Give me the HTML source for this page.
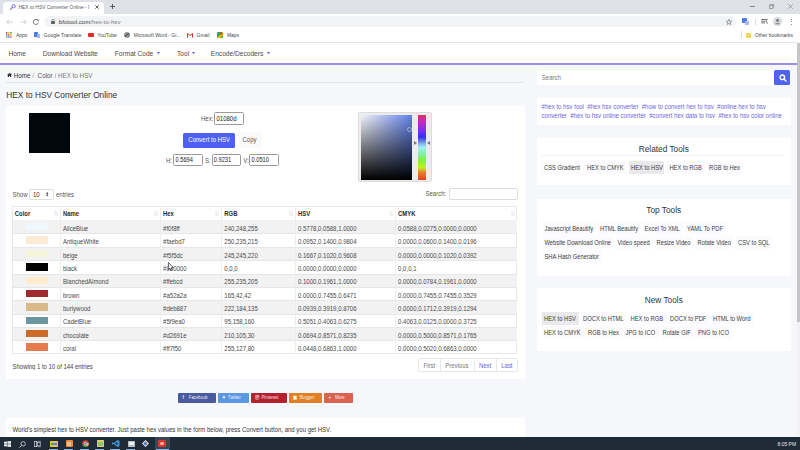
<!DOCTYPE html>
<html><head><meta charset="utf-8"><style>
*{box-sizing:border-box;margin:0;padding:0}
html,body{width:800px;height:450px;overflow:hidden;font-family:"Liberation Sans",sans-serif;background:#f6f7fb;color:#333}
.a{position:absolute;white-space:nowrap;line-height:1}
svg{position:absolute;overflow:visible}
</style></head><body>
<div class="a" style="left:0px;top:0px;width:800px;height:13.5px;background:#dee1e6"></div>
<div class="a" style="left:3px;top:2px;width:100.5px;height:11.5px;background:#fff;border-radius:4px 4px 0 0"></div>
<svg style="left:9px;top:3.5px" width="7" height="7" viewBox="0 0 7 7"><circle cx="4.6" cy="2.2" r="1.7" fill="none" stroke="#7a6ff0" stroke-width="1"/><path d="M3.6 3.2 L1.2 5.8" stroke="#7a6ff0" stroke-width="1.1"/><circle cx="1.6" cy="4.6" r="0.8" fill="#f2c94c"/></svg>
<div class="a" style="left:18.5px;top:6.0px;font-size:4.9px;color:#55585c;">HEX to HSV Converter Online - I</div>
<svg style="left:94.5px;top:5px" width="4" height="4" viewBox="0 0 4 4"><path d="M0.3 0.3L3.7 3.7M3.7 0.3L0.3 3.7" stroke="#3c4043" stroke-width="0.8"/></svg>
<svg style="left:109.5px;top:4px" width="5" height="5" viewBox="0 0 5 5"><path d="M2.5 0V5M0 2.5H5" stroke="#3c4043" stroke-width="0.8"/></svg>
<div class="a" style="left:750px;top:6px;width:4.5px;height:0.7px;background:#888"></div>
<svg style="left:769px;top:4px" width="5" height="5" viewBox="0 0 5 5"><rect x="0.4" y="1.2" width="3.4" height="3.4" fill="none" stroke="#888" stroke-width="0.7"/><path d="M1.2 0.4H4.6V3.8" fill="none" stroke="#888" stroke-width="0.7"/></svg>
<svg style="left:788px;top:3.5px" width="5" height="5" viewBox="0 0 5 5"><path d="M0.2 0.2L4.8 4.8M4.8 0.2L0.2 4.8" stroke="#888" stroke-width="0.7"/></svg>
<div class="a" style="left:0px;top:13.5px;width:800px;height:14.5px;background:#fff"></div>
<svg style="left:6px;top:18.5px" width="7" height="6" viewBox="0 0 7 6"><path d="M6.5 3H0.8M3.2 0.5L0.7 3L3.2 5.5" fill="none" stroke="#bdc1c6" stroke-width="0.8"/></svg>
<svg style="left:19.5px;top:18.5px" width="7" height="6" viewBox="0 0 7 6"><path d="M0.5 3H6.2M3.8 0.5L6.3 3L3.8 5.5" fill="none" stroke="#bdc1c6" stroke-width="0.8"/></svg>
<svg style="left:33px;top:18.5px" width="6" height="6" viewBox="0 0 6 6"><path d="M5 1.6A2.5 2.5 0 1 0 5.3 3.6" fill="none" stroke="#5f6368" stroke-width="0.9"/><path d="M3.6 0.6H5.6V2.6Z" fill="#5f6368"/></svg>
<div class="a" style="left:45px;top:16px;width:691px;height:11px;background:#f1f3f4;border-radius:6px"></div>
<svg style="left:51px;top:19px" width="4" height="5" viewBox="0 0 4 5"><rect x="0" y="2" width="4" height="3" rx="0.4" fill="#5f6368"/><path d="M0.9 2.2V1.4A1.1 1.1 0 0 1 3.1 1.4V2.2" fill="none" stroke="#5f6368" stroke-width="0.6"/></svg>
<div class="a" style="left:58.8px;top:18.6px;font-size:6.1px;color:#3a3c40;">bfotool.com<span style="color:#7a7e83">/hex-to-hsv</span></div>
<svg style="left:726px;top:19px" width="6" height="6" viewBox="0 0 10 10"><path d="M5 0.6L6.3 3.6L9.5 3.8L7 5.9L7.8 9.2L5 7.4L2.2 9.2L3 5.9L0.5 3.8L3.7 3.6Z" fill="none" stroke="#5f6368" stroke-width="1"/></svg>
<div class="a" style="left:742px;top:18px;width:5px;height:5px;background:#4a7bec;border-radius:0.6px"></div>
<div class="a" style="left:745px;top:21px;width:4px;height:4px;background:#aab8f0;border-radius:0.6px"></div>
<div class="a" style="left:754.5px;top:19px;width:0.6px;height:6px;background:#dadce0"></div>
<svg style="left:761px;top:19px" width="7" height="5" viewBox="0 0 7 5"><path d="M0.3 0.5H6.7M0.3 2.2H4.5M0.3 3.9H4M5.2 1.4L6.4 4.6" stroke="#5f6368" stroke-width="0.9"/></svg>
<svg style="left:773px;top:17px" width="9" height="9" viewBox="0 0 9 9"><circle cx="4.5" cy="4.5" r="4.5" fill="#dadce0"/><circle cx="4.5" cy="3.4" r="1.6" fill="#80868b"/><path d="M1.6 7.2A3.4 2.6 0 0 1 7.4 7.2" fill="#80868b"/></svg>
<div class="a" style="left:790.5px;top:19.2px;width:1.1px;height:1.1px;background:#5f6368;border-radius:50%"></div>
<div class="a" style="left:790.5px;top:21.4px;width:1.1px;height:1.1px;background:#5f6368;border-radius:50%"></div>
<div class="a" style="left:790.5px;top:23.6px;width:1.1px;height:1.1px;background:#5f6368;border-radius:50%"></div>
<div class="a" style="left:0px;top:28px;width:800px;height:15px;background:#fff;border-bottom:0.9px solid #e3e4e7"></div>
<svg style="left:6px;top:32px" width="6" height="6" viewBox="0 0 6 6"><rect x="0.0" y="0.0" width="1.5" height="1.5" fill="#ea4335"/><rect x="2.1" y="0.0" width="1.5" height="1.5" fill="#fbbc04"/><rect x="4.2" y="0.0" width="1.5" height="1.5" fill="#34a853"/><rect x="0.0" y="2.1" width="1.5" height="1.5" fill="#4285f4"/><rect x="2.1" y="2.1" width="1.5" height="1.5" fill="#ea4335"/><rect x="4.2" y="2.1" width="1.5" height="1.5" fill="#fbbc04"/><rect x="0.0" y="4.2" width="1.5" height="1.5" fill="#34a853"/><rect x="2.1" y="4.2" width="1.5" height="1.5" fill="#4285f4"/><rect x="4.2" y="4.2" width="1.5" height="1.5" fill="#ea4335"/></svg>
<div class="a" style="left:16px;top:33.6px;font-size:4.95px;color:#45484c;">Apps</div>
<div class="a" style="left:34px;top:32px;width:4px;height:5px;background:#4a7bec;border-radius:0.5px"></div>
<div class="a" style="left:36.5px;top:34px;width:3.5px;height:4px;background:#a8b6ef;border-radius:0.5px"></div>
<div class="a" style="left:43.8px;top:33.6px;font-size:4.95px;color:#45484c;">Google Translate</div>
<div class="a" style="left:88px;top:33px;width:5.5px;height:3.8px;background:#e02a2a;border-radius:1px"></div>
<div class="a" style="left:97.3px;top:33.6px;font-size:4.95px;color:#45484c;">YouTube</div>
<svg style="left:124px;top:32px" width="6" height="6" viewBox="0 0 6 6"><circle cx="3" cy="3" r="2.8" fill="#5f6368"/><path d="M1 2.2C2 2.6 2.2 1.2 3.4 1.1M2.4 5.4C2.6 4 3.8 4.2 4.6 3.4" stroke="#fff" stroke-width="0.6" fill="none"/></svg>
<div class="a" style="left:133.8px;top:33.6px;font-size:4.95px;color:#45484c;">Microsoft Word - Gi...</div>
<svg style="left:187px;top:33px" width="6" height="4.5" viewBox="0 0 6 4.5"><path d="M0.5 4.5V0.5L3 2.5L5.5 0.5V4.5" fill="none" stroke="#d93025" stroke-width="1"/></svg>
<div class="a" style="left:196.6px;top:33.6px;font-size:4.95px;color:#45484c;">Gmail</div>
<svg style="left:217px;top:32px" width="6" height="6" viewBox="0 0 6 6"><rect width="6" height="6" rx="1" fill="#34a853"/><path d="M0 6L6 0V3L3 6Z" fill="#fbbc04"/><circle cx="4.2" cy="1.8" r="1.3" fill="#ea4335"/></svg>
<div class="a" style="left:227px;top:33.6px;font-size:4.95px;color:#45484c;">Maps</div>
<div class="a" style="left:741px;top:31px;width:0.6px;height:7px;background:#dadce0"></div>
<div class="a" style="left:746px;top:32.5px;width:4.5px;height:5.5px;background:#f5d55f;border-radius:0.5px"></div>
<div class="a" style="left:755px;top:33.6px;font-size:4.95px;color:#45484c;">Other bookmarks</div>
<div class="a" style="left:0px;top:43px;width:797px;height:20px;background:#fff"></div>
<div class="a" style="left:0px;top:62.8px;width:797px;height:1.8px;background:#978fea"></div>
<div class="a" style="left:8.4px;top:50.8px;font-size:6.6px;color:#4a4a4a;transform-origin:0 5.59px;transform:scaleY(1.15);">Home</div>
<div class="a" style="left:42.8px;top:50.8px;font-size:6.6px;color:#4a4a4a;transform-origin:0 5.59px;transform:scaleY(1.15);">Download Website</div>
<div class="a" style="left:114.8px;top:50.8px;font-size:6.6px;color:#4a4a4a;transform-origin:0 5.59px;transform:scaleY(1.15);">Format Code</div>
<svg style="left:156.7px;top:52.2px" width="3" height="2.2" viewBox="0 0 3 2.2"><path d="M0 0H3L1.5 2.2Z" fill="#5b63e6"/></svg>
<div class="a" style="left:177px;top:50.8px;font-size:6.6px;color:#4a4a4a;transform-origin:0 5.59px;transform:scaleY(1.15);">Tool</div>
<svg style="left:191.8px;top:52.2px" width="3" height="2.2" viewBox="0 0 3 2.2"><path d="M0 0H3L1.5 2.2Z" fill="#5b63e6"/></svg>
<div class="a" style="left:210.8px;top:50.8px;font-size:6.6px;color:#4a4a4a;transform-origin:0 5.59px;transform:scaleY(1.15);">Encode/Decoders</div>
<svg style="left:267.2px;top:52.2px" width="3" height="2.2" viewBox="0 0 3 2.2"><path d="M0 0H3L1.5 2.2Z" fill="#5b63e6"/></svg>
<div class="a" style="left:797px;top:42px;width:3px;height:395px;background:#f3f3f5"></div>
<div class="a" style="left:797px;top:43px;width:3px;height:279px;background:#c5c5c8"></div>
<svg style="left:6.5px;top:72.8px" width="5" height="4" viewBox="0 0 5 4"><path d="M0 2.1L2.5 0L5 2.1H4.2V4H3V2.9H2V4H0.8V2.1Z" fill="#333"/><rect x="3.5" y="0.3" width="0.7" height="1.2" fill="#333"/></svg>
<div class="a" style="left:13.8px;top:72.8px;font-size:6.3px;color:#333;transform-origin:0 5.33px;transform:scaleY(1.15);">Home <span style="color:#999">/</span>&nbsp; <span style="color:#555">Color</span> <span style="color:#777">/ HEX to HSV</span></div>
<div class="a" style="left:6px;top:82px;width:518px;height:0.8px;background:#e4e5ea"></div>
<div class="a" style="left:6.3px;top:90.5px;font-size:8.32px;color:#333;transform-origin:0 7.04px;transform:scaleY(1.15);">HEX to HSV Converter Online</div>
<div class="a" style="left:6px;top:105.6px;width:518.5px;height:273.4px;background:#fff"></div>
<div class="a" style="left:29px;top:113px;width:41px;height:40px;background:#01080d"></div>
<div class="a" style="left:201px;top:115.5px;font-size:6px;color:#555;transform-origin:0 5.08px;transform:scaleY(1.15);">Hex:</div>
<div class="a" style="left:214px;top:111.7px;width:29.7px;height:13px;background:#fff;border:0.9px solid #9a9a9a;border-radius:1.5px"></div>
<div class="a" style="left:216.5px;top:115.5px;font-size:6px;color:#222;transform-origin:0 5.08px;transform:scaleY(1.15);">01080d</div>
<div class="a" style="left:183px;top:132.6px;width:52px;height:15.4px;background:#4e5ff4;border-radius:1.5px"></div>
<div class="a" style="left:188.3px;top:136.8px;font-size:6px;color:#fff;transform-origin:0 5.08px;transform:scaleY(1.15);">Convert to HSV</div>
<div class="a" style="left:238px;top:132.3px;width:24px;height:15.6px;background:#fafafb;border-radius:1.5px"></div>
<div class="a" style="left:242.5px;top:136.8px;font-size:6px;color:#555;transform-origin:0 5.08px;transform:scaleY(1.15);">Copy</div>
<div class="a" style="left:166px;top:157.8px;font-size:6px;color:#555;transform-origin:0 5.08px;transform:scaleY(1.15);">H:</div>
<div class="a" style="left:173.2px;top:154.3px;width:29.7px;height:11.8px;background:#fff;border:0.9px solid #9a9a9a;border-radius:1.5px"></div>
<div class="a" style="left:175.5px;top:157.8px;font-size:5.699999999999999px;color:#222;transform-origin:0 4.83px;transform:scaleY(1.15);">0.5694</div>
<div class="a" style="left:205px;top:157.8px;font-size:6px;color:#555;transform-origin:0 5.08px;transform:scaleY(1.15);">S:</div>
<div class="a" style="left:211.5px;top:154.3px;width:29.7px;height:11.8px;background:#fff;border:0.9px solid #9a9a9a;border-radius:1.5px"></div>
<div class="a" style="left:213.8px;top:157.8px;font-size:5.699999999999999px;color:#222;transform-origin:0 4.83px;transform:scaleY(1.15);">0.9231</div>
<div class="a" style="left:243.3px;top:157.8px;font-size:6px;color:#555;transform-origin:0 5.08px;transform:scaleY(1.15);">V:</div>
<div class="a" style="left:249.2px;top:154.3px;width:29.7px;height:11.8px;background:#fff;border:0.9px solid #9a9a9a;border-radius:1.5px"></div>
<div class="a" style="left:251.5px;top:157.8px;font-size:5.699999999999999px;color:#222;transform-origin:0 4.83px;transform:scaleY(1.15);">0.0510</div>
<div class="a" style="left:358.1px;top:111.6px;width:73.8px;height:70.2px;background:#ececec;border:0.8px solid #dcdcdc;border-radius:2px"></div>
<div class="a" style="left:361.4px;top:115.3px;width:50.2px;height:64.7px;background:linear-gradient(to top,#000,rgba(0,0,0,0)),linear-gradient(to right,#f4f4f8,#6080e8)"></div>
<svg style="left:406.5px;top:126.5px" width="5" height="5" viewBox="0 0 5 5"><circle cx="2.5" cy="2.5" r="2" fill="none" stroke="#c8c8c8" stroke-width="0.7"/></svg>
<div class="a" style="left:418px;top:115.3px;width:8px;height:64.7px;background:linear-gradient(to bottom,#e0305a 0%,#d020d0 11%,#7030f0 26%,#3030f0 34%,#80a0f0 43%,#a0f0f0 50%,#80f0a0 61%,#80f040 69%,#c0f020 81%,#f08020 88%,#e04020 100%)"></div>
<svg style="left:414.3px;top:141.4px" width="3" height="4" viewBox="0 0 3 4"><path d="M0 0L3 2L0 4Z" fill="#777"/></svg>
<svg style="left:427px;top:141.4px" width="3" height="4" viewBox="0 0 3 4"><path d="M3 0L0 2L3 4Z" fill="#777"/></svg>
<div class="a" style="left:12.5px;top:191.5px;font-size:6px;color:#555;transform-origin:0 5.08px;transform:scaleY(1.15);">Show</div>
<div class="a" style="left:29px;top:188.6px;width:25px;height:11.5px;background:#fff;border:0.8px solid #dedede;border-radius:2px"></div>
<div class="a" style="left:33px;top:191.5px;font-size:6px;color:#333;transform-origin:0 5.08px;transform:scaleY(1.15);">10</div>
<svg style="left:46px;top:192px" width="2.4" height="4.4" viewBox="0 0 2.4 4.4"><path d="M0 1.8L1.2 0L2.4 1.8ZM0 2.6H2.4L1.2 4.4Z" fill="#333"/></svg>
<div class="a" style="left:56px;top:191.5px;font-size:6px;color:#555;transform-origin:0 5.08px;transform:scaleY(1.15);">entries</div>
<div class="a" style="left:425.5px;top:191.1px;font-size:6px;color:#555;transform-origin:0 5.08px;transform:scaleY(1.15);">Search:</div>
<div class="a" style="left:449.4px;top:188.2px;width:69px;height:12.2px;background:#fff;border:0.8px solid #dcdcdc;border-radius:2px"></div>
<div class="a" style="left:12px;top:206px;width:505px;height:147.8px;border:0.8px solid #e8e8e8"></div>
<div class="a" style="left:14.8px;top:211.6px;font-size:5.9px;color:#2a2a2a;transform-origin:0 4.99px;transform:scaleY(1.15);font-weight:bold">Color</div>
<svg style="left:53.7px;top:211px" width="4" height="5" viewBox="0 0 4 5"><path d="M1 4.6V0.6M0.2 1.4L1 0.4L1.8 1.4M3 0.4V4.4M2.2 3.6L3 4.6L3.8 3.6" fill="none" stroke="#cfcfcf" stroke-width="0.5"/></svg>
<div class="a" style="left:63.0px;top:211.6px;font-size:5.9px;color:#2a2a2a;transform-origin:0 4.99px;transform:scaleY(1.15);font-weight:bold">Name</div>
<svg style="left:153.8px;top:211px" width="4" height="5" viewBox="0 0 4 5"><path d="M1 4.6V0.6M0.2 1.4L1 0.4L1.8 1.4M3 0.4V4.4M2.2 3.6L3 4.6L3.8 3.6" fill="none" stroke="#cfcfcf" stroke-width="0.5"/></svg>
<div class="a" style="left:163.10000000000002px;top:211.6px;font-size:5.9px;color:#2a2a2a;transform-origin:0 4.99px;transform:scaleY(1.15);font-weight:bold">Hex</div>
<svg style="left:215.0px;top:211px" width="4" height="5" viewBox="0 0 4 5"><path d="M1 4.6V0.6M0.2 1.4L1 0.4L1.8 1.4M3 0.4V4.4M2.2 3.6L3 4.6L3.8 3.6" fill="none" stroke="#cfcfcf" stroke-width="0.5"/></svg>
<div class="a" style="left:224.3px;top:211.6px;font-size:5.9px;color:#2a2a2a;transform-origin:0 4.99px;transform:scaleY(1.15);font-weight:bold">RGB</div>
<svg style="left:288.7px;top:211px" width="4" height="5" viewBox="0 0 4 5"><path d="M1 4.6V0.6M0.2 1.4L1 0.4L1.8 1.4M3 0.4V4.4M2.2 3.6L3 4.6L3.8 3.6" fill="none" stroke="#cfcfcf" stroke-width="0.5"/></svg>
<div class="a" style="left:298.0px;top:211.6px;font-size:5.9px;color:#2a2a2a;transform-origin:0 4.99px;transform:scaleY(1.15);font-weight:bold">HSV</div>
<svg style="left:388.8px;top:211px" width="4" height="5" viewBox="0 0 4 5"><path d="M1 4.6V0.6M0.2 1.4L1 0.4L1.8 1.4M3 0.4V4.4M2.2 3.6L3 4.6L3.8 3.6" fill="none" stroke="#cfcfcf" stroke-width="0.5"/></svg>
<div class="a" style="left:398.1px;top:211.6px;font-size:5.9px;color:#2a2a2a;transform-origin:0 4.99px;transform:scaleY(1.15);font-weight:bold">CMYK</div>
<svg style="left:510.5px;top:211px" width="4" height="5" viewBox="0 0 4 5"><path d="M1 4.6V0.6M0.2 1.4L1 0.4L1.8 1.4M3 0.4V4.4M2.2 3.6L3 4.6L3.8 3.6" fill="none" stroke="#cfcfcf" stroke-width="0.5"/></svg>
<div class="a" style="left:12px;top:219.5px;width:505px;height:1px;background:#d4d4d4"></div>
<div class="a" style="left:12.5px;top:220px;width:504px;height:13.38px;background:#f2f2f2"></div>
<div class="a" style="left:26.3px;top:223px;width:21.3px;height:7.4px;background:#f0f8ff"></div>
<div class="a" style="left:63.0px;top:225.8px;font-size:6.03px;color:#4a4a4a;transform-origin:0 5.10px;transform:scaleY(1.15);">AliceBlue</div>
<div class="a" style="left:163.10000000000002px;top:225.8px;font-size:6.03px;color:#4a4a4a;transform-origin:0 5.10px;transform:scaleY(1.15);">#f0f8ff</div>
<div class="a" style="left:224.3px;top:225.8px;font-size:6.03px;color:#4a4a4a;transform-origin:0 5.10px;transform:scaleY(1.15);">240,248,255</div>
<div class="a" style="left:298.0px;top:225.8px;font-size:6.03px;color:#4a4a4a;transform-origin:0 5.10px;transform:scaleY(1.15);">0.5778,0.0588,1.0000</div>
<div class="a" style="left:398.1px;top:225.8px;font-size:6.03px;color:#4a4a4a;transform-origin:0 5.10px;transform:scaleY(1.15);">0.0588,0.0275,0.0000,0.0000</div>
<div class="a" style="left:12.5px;top:233.38px;width:504px;height:0.8px;background:#e6e6e6"></div>
<div class="a" style="left:26.3px;top:236.38px;width:21.3px;height:7.4px;background:#faebd7"></div>
<div class="a" style="left:63.0px;top:239.18px;font-size:6.03px;color:#4a4a4a;transform-origin:0 5.10px;transform:scaleY(1.15);">AntiqueWhite</div>
<div class="a" style="left:163.10000000000002px;top:239.18px;font-size:6.03px;color:#4a4a4a;transform-origin:0 5.10px;transform:scaleY(1.15);">#faebd7</div>
<div class="a" style="left:224.3px;top:239.18px;font-size:6.03px;color:#4a4a4a;transform-origin:0 5.10px;transform:scaleY(1.15);">250,235,215</div>
<div class="a" style="left:298.0px;top:239.18px;font-size:6.03px;color:#4a4a4a;transform-origin:0 5.10px;transform:scaleY(1.15);">0.0952,0.1400,0.9804</div>
<div class="a" style="left:398.1px;top:239.18px;font-size:6.03px;color:#4a4a4a;transform-origin:0 5.10px;transform:scaleY(1.15);">0.0000,0.0600,0.1400,0.0196</div>
<div class="a" style="left:12.5px;top:246.76px;width:504px;height:13.38px;background:#f2f2f2"></div>
<div class="a" style="left:12.5px;top:246.76px;width:504px;height:0.8px;background:#e6e6e6"></div>
<div class="a" style="left:26.3px;top:249.76px;width:21.3px;height:7.4px;background:#f5f5dc"></div>
<div class="a" style="left:63.0px;top:252.56px;font-size:6.03px;color:#4a4a4a;transform-origin:0 5.10px;transform:scaleY(1.15);">beige</div>
<div class="a" style="left:163.10000000000002px;top:252.56px;font-size:6.03px;color:#4a4a4a;transform-origin:0 5.10px;transform:scaleY(1.15);">#f5f5dc</div>
<div class="a" style="left:224.3px;top:252.56px;font-size:6.03px;color:#4a4a4a;transform-origin:0 5.10px;transform:scaleY(1.15);">245,245,220</div>
<div class="a" style="left:298.0px;top:252.56px;font-size:6.03px;color:#4a4a4a;transform-origin:0 5.10px;transform:scaleY(1.15);">0.1667,0.1020,0.9608</div>
<div class="a" style="left:398.1px;top:252.56px;font-size:6.03px;color:#4a4a4a;transform-origin:0 5.10px;transform:scaleY(1.15);">0.0000,0.0000,0.1020,0.0392</div>
<div class="a" style="left:12.5px;top:260.14px;width:504px;height:0.8px;background:#e6e6e6"></div>
<div class="a" style="left:26.3px;top:263.14px;width:21.3px;height:7.4px;background:#000000"></div>
<div class="a" style="left:63.0px;top:265.94px;font-size:6.03px;color:#4a4a4a;transform-origin:0 5.10px;transform:scaleY(1.15);">black</div>
<div class="a" style="left:163.10000000000002px;top:265.94px;font-size:6.03px;color:#4a4a4a;transform-origin:0 5.10px;transform:scaleY(1.15);">#000000</div>
<div class="a" style="left:224.3px;top:265.94px;font-size:6.03px;color:#4a4a4a;transform-origin:0 5.10px;transform:scaleY(1.15);">0,0,0</div>
<div class="a" style="left:298.0px;top:265.94px;font-size:6.03px;color:#4a4a4a;transform-origin:0 5.10px;transform:scaleY(1.15);">0.0000,0.0000,0.0000</div>
<div class="a" style="left:398.1px;top:265.94px;font-size:6.03px;color:#4a4a4a;transform-origin:0 5.10px;transform:scaleY(1.15);">0,0,0,1</div>
<div class="a" style="left:12.5px;top:273.52px;width:504px;height:13.38px;background:#f2f2f2"></div>
<div class="a" style="left:12.5px;top:273.52px;width:504px;height:0.8px;background:#e6e6e6"></div>
<div class="a" style="left:26.3px;top:276.52px;width:21.3px;height:7.4px;background:#ffebcd"></div>
<div class="a" style="left:63.0px;top:279.32px;font-size:6.03px;color:#4a4a4a;transform-origin:0 5.10px;transform:scaleY(1.15);">BlanchedAlmond</div>
<div class="a" style="left:163.10000000000002px;top:279.32px;font-size:6.03px;color:#4a4a4a;transform-origin:0 5.10px;transform:scaleY(1.15);">#ffebcd</div>
<div class="a" style="left:224.3px;top:279.32px;font-size:6.03px;color:#4a4a4a;transform-origin:0 5.10px;transform:scaleY(1.15);">255,235,205</div>
<div class="a" style="left:298.0px;top:279.32px;font-size:6.03px;color:#4a4a4a;transform-origin:0 5.10px;transform:scaleY(1.15);">0.1000,0.1961,1.0000</div>
<div class="a" style="left:398.1px;top:279.32px;font-size:6.03px;color:#4a4a4a;transform-origin:0 5.10px;transform:scaleY(1.15);">0.0000,0.0784,0.1961,0.0000</div>
<div class="a" style="left:12.5px;top:286.9px;width:504px;height:0.8px;background:#e6e6e6"></div>
<div class="a" style="left:26.3px;top:289.9px;width:21.3px;height:7.4px;background:#a02a2e"></div>
<div class="a" style="left:63.0px;top:292.7px;font-size:6.03px;color:#4a4a4a;transform-origin:0 5.10px;transform:scaleY(1.15);">brown</div>
<div class="a" style="left:163.10000000000002px;top:292.7px;font-size:6.03px;color:#4a4a4a;transform-origin:0 5.10px;transform:scaleY(1.15);">#a52a2a</div>
<div class="a" style="left:224.3px;top:292.7px;font-size:6.03px;color:#4a4a4a;transform-origin:0 5.10px;transform:scaleY(1.15);">165,42,42</div>
<div class="a" style="left:298.0px;top:292.7px;font-size:6.03px;color:#4a4a4a;transform-origin:0 5.10px;transform:scaleY(1.15);">0.0000,0.7455,0.6471</div>
<div class="a" style="left:398.1px;top:292.7px;font-size:6.03px;color:#4a4a4a;transform-origin:0 5.10px;transform:scaleY(1.15);">0.0000,0.7455,0.7455,0.3529</div>
<div class="a" style="left:12.5px;top:300.28px;width:504px;height:13.38px;background:#f2f2f2"></div>
<div class="a" style="left:12.5px;top:300.28px;width:504px;height:0.8px;background:#e6e6e6"></div>
<div class="a" style="left:26.3px;top:303.28px;width:21.3px;height:7.4px;background:#dbb88a"></div>
<div class="a" style="left:63.0px;top:306.08px;font-size:6.03px;color:#4a4a4a;transform-origin:0 5.10px;transform:scaleY(1.15);">burlywood</div>
<div class="a" style="left:163.10000000000002px;top:306.08px;font-size:6.03px;color:#4a4a4a;transform-origin:0 5.10px;transform:scaleY(1.15);">#deb887</div>
<div class="a" style="left:224.3px;top:306.08px;font-size:6.03px;color:#4a4a4a;transform-origin:0 5.10px;transform:scaleY(1.15);">222,184,135</div>
<div class="a" style="left:298.0px;top:306.08px;font-size:6.03px;color:#4a4a4a;transform-origin:0 5.10px;transform:scaleY(1.15);">0.0939,0.3919,0.8706</div>
<div class="a" style="left:398.1px;top:306.08px;font-size:6.03px;color:#4a4a4a;transform-origin:0 5.10px;transform:scaleY(1.15);">0.0000,0.1712,0.3919,0.1294</div>
<div class="a" style="left:12.5px;top:313.66px;width:504px;height:0.8px;background:#e6e6e6"></div>
<div class="a" style="left:26.3px;top:316.66px;width:21.3px;height:7.4px;background:#6a96a0"></div>
<div class="a" style="left:63.0px;top:319.46px;font-size:6.03px;color:#4a4a4a;transform-origin:0 5.10px;transform:scaleY(1.15);">CadetBlue</div>
<div class="a" style="left:163.10000000000002px;top:319.46px;font-size:6.03px;color:#4a4a4a;transform-origin:0 5.10px;transform:scaleY(1.15);">#5f9ea0</div>
<div class="a" style="left:224.3px;top:319.46px;font-size:6.03px;color:#4a4a4a;transform-origin:0 5.10px;transform:scaleY(1.15);">95,158,160</div>
<div class="a" style="left:298.0px;top:319.46px;font-size:6.03px;color:#4a4a4a;transform-origin:0 5.10px;transform:scaleY(1.15);">0.5051,0.4063,0.6275</div>
<div class="a" style="left:398.1px;top:319.46px;font-size:6.03px;color:#4a4a4a;transform-origin:0 5.10px;transform:scaleY(1.15);">0.4063,0.0125,0.0000,0.3725</div>
<div class="a" style="left:12.5px;top:327.04px;width:504px;height:13.38px;background:#f2f2f2"></div>
<div class="a" style="left:12.5px;top:327.04px;width:504px;height:0.8px;background:#e6e6e6"></div>
<div class="a" style="left:26.3px;top:330.04px;width:21.3px;height:7.4px;background:#cc6a2a"></div>
<div class="a" style="left:63.0px;top:332.84px;font-size:6.03px;color:#4a4a4a;transform-origin:0 5.10px;transform:scaleY(1.15);">chocolate</div>
<div class="a" style="left:163.10000000000002px;top:332.84px;font-size:6.03px;color:#4a4a4a;transform-origin:0 5.10px;transform:scaleY(1.15);">#d2691e</div>
<div class="a" style="left:224.3px;top:332.84px;font-size:6.03px;color:#4a4a4a;transform-origin:0 5.10px;transform:scaleY(1.15);">210,105,30</div>
<div class="a" style="left:298.0px;top:332.84px;font-size:6.03px;color:#4a4a4a;transform-origin:0 5.10px;transform:scaleY(1.15);">0.0694,0.8571,0.8235</div>
<div class="a" style="left:398.1px;top:332.84px;font-size:6.03px;color:#4a4a4a;transform-origin:0 5.10px;transform:scaleY(1.15);">0.0000,0.5000,0.8571,0.1765</div>
<div class="a" style="left:12.5px;top:340.42px;width:504px;height:0.8px;background:#e6e6e6"></div>
<div class="a" style="left:26.3px;top:343.42px;width:21.3px;height:7.4px;background:#e87a50"></div>
<div class="a" style="left:63.0px;top:346.22px;font-size:6.03px;color:#4a4a4a;transform-origin:0 5.10px;transform:scaleY(1.15);">coral</div>
<div class="a" style="left:163.10000000000002px;top:346.22px;font-size:6.03px;color:#4a4a4a;transform-origin:0 5.10px;transform:scaleY(1.15);">#ff7f50</div>
<div class="a" style="left:224.3px;top:346.22px;font-size:6.03px;color:#4a4a4a;transform-origin:0 5.10px;transform:scaleY(1.15);">255,127,80</div>
<div class="a" style="left:298.0px;top:346.22px;font-size:6.03px;color:#4a4a4a;transform-origin:0 5.10px;transform:scaleY(1.15);">0.0448,0.6863,1.0000</div>
<div class="a" style="left:398.1px;top:346.22px;font-size:6.03px;color:#4a4a4a;transform-origin:0 5.10px;transform:scaleY(1.15);">0.0000,0.5020,0.6863,0.0000</div>
<div class="a" style="left:59.800000000000004px;top:206px;width:0.8px;height:147.8px;background:#ededed"></div>
<div class="a" style="left:159.9px;top:206px;width:0.8px;height:147.8px;background:#ededed"></div>
<div class="a" style="left:221.1px;top:206px;width:0.8px;height:147.8px;background:#ededed"></div>
<div class="a" style="left:294.8px;top:206px;width:0.8px;height:147.8px;background:#ededed"></div>
<div class="a" style="left:394.90000000000003px;top:206px;width:0.8px;height:147.8px;background:#ededed"></div>
<div class="a" style="left:12.6px;top:365.3px;font-size:5.95px;color:#444;transform-origin:0 5.04px;transform:scaleY(1.15);">Showing 1 to 10 of 144 entries</div>
<div class="a" style="left:418px;top:358.2px;width:100.2px;height:14.3px;background:#fff;border:0.8px solid #e8e8e8;border-radius:2px"></div>
<div class="a" style="left:440.4px;top:358.2px;width:0.8px;height:14.3px;background:#e8e8e8"></div>
<div class="a" style="left:474.2px;top:358.2px;width:0.8px;height:14.3px;background:#e8e8e8"></div>
<div class="a" style="left:496.2px;top:358.2px;width:0.8px;height:14.3px;background:#e8e8e8"></div>
<div class="a" style="left:423.6px;top:364.2px;font-size:5.95px;color:#777;transform-origin:0 5.04px;transform:scaleY(1.15);">First</div>
<div class="a" style="left:445.3px;top:364.2px;font-size:5.95px;color:#777;transform-origin:0 5.04px;transform:scaleY(1.15);">Previous</div>
<div class="a" style="left:479px;top:364.2px;font-size:5.95px;color:#6a62e6;transform-origin:0 5.04px;transform:scaleY(1.15);">Next</div>
<div class="a" style="left:501.3px;top:364.2px;font-size:5.95px;color:#6a62e6;transform-origin:0 5.04px;transform:scaleY(1.15);">Last</div>
<div class="a" style="left:178.3px;top:392.5px;width:37.3px;height:10.3px;background:#4a5a9e;border-radius:1px"></div>
<div class="a" style="left:182.5px;top:395.9px;font-size:4.4px;color:rgba(255,255,255,.9);transform-origin:0 3.72px;transform:scaleY(1.15);font-weight:bold">f</div>
<div class="a" style="left:188.8px;top:396.3px;font-size:4.3px;color:rgba(255,255,255,.9);transform-origin:0 3.64px;transform:scaleY(1.15);">Facebook</div>
<div class="a" style="left:217.5px;top:392.5px;width:31.5px;height:10.3px;background:#5c98e2;border-radius:1px"></div>
<div class="a" style="left:221.7px;top:395.9px;font-size:4.4px;color:rgba(255,255,255,.9);transform-origin:0 3.72px;transform:scaleY(1.15);font-weight:bold">&#10038;</div>
<div class="a" style="left:228.0px;top:396.3px;font-size:4.3px;color:rgba(255,255,255,.9);transform-origin:0 3.64px;transform:scaleY(1.15);">Twitter</div>
<div class="a" style="left:251px;top:392.5px;width:35.5px;height:10.3px;background:#b5202d;border-radius:1px"></div>
<div class="a" style="left:255.2px;top:395.9px;font-size:4.4px;color:rgba(255,255,255,.9);transform-origin:0 3.72px;transform:scaleY(1.15);font-weight:bold">&#9413;</div>
<div class="a" style="left:261.5px;top:396.3px;font-size:4.3px;color:rgba(255,255,255,.9);transform-origin:0 3.64px;transform:scaleY(1.15);">Pinterest</div>
<div class="a" style="left:289px;top:392.5px;width:33px;height:10.3px;background:#e07f24;border-radius:1px"></div>
<div class="a" style="left:293.2px;top:395.9px;font-size:4.4px;color:rgba(255,255,255,.9);transform-origin:0 3.72px;transform:scaleY(1.15);font-weight:bold">&#9635;</div>
<div class="a" style="left:299.5px;top:396.3px;font-size:4.3px;color:rgba(255,255,255,.9);transform-origin:0 3.64px;transform:scaleY(1.15);">Blogger</div>
<div class="a" style="left:324.4px;top:392.5px;width:28.4px;height:10.3px;background:#d9634f;border-radius:1px"></div>
<div class="a" style="left:328.59999999999997px;top:395.9px;font-size:4.4px;color:rgba(255,255,255,.9);transform-origin:0 3.72px;transform:scaleY(1.15);font-weight:bold">+</div>
<div class="a" style="left:334.9px;top:396.3px;font-size:4.3px;color:rgba(255,255,255,.9);transform-origin:0 3.64px;transform:scaleY(1.15);">More</div>
<div class="a" style="left:6px;top:418px;width:518.5px;height:19px;background:#fff"></div>
<div class="a" style="left:12.5px;top:426.6px;font-size:6px;color:#333;transform-origin:0 5.08px;transform:scaleY(1.15);">World's simplest hex to HSV converter. Just paste hex values in the form below, press Convert button, and you get HSV.</div>
<div class="a" style="left:537.0px;top:69.8px;width:237.5px;height:15.1px;background:#fff"></div>
<div class="a" style="left:541.8px;top:74.8px;font-size:6px;color:#777;transform-origin:0 5.08px;transform:scaleY(1.15);">Search</div>
<div class="a" style="left:774.3px;top:70px;width:16.2px;height:14.8px;background:#4f62f2;border-radius:1.6px"></div>
<svg style="left:778.5px;top:73.8px" width="8" height="8" viewBox="0 0 8 8"><circle cx="3.3" cy="3.3" r="2.3" fill="none" stroke="#fff" stroke-width="1.3"/><path d="M5 5L7 7" stroke="#fff" stroke-width="1.4" stroke-linecap="round"/></svg>
<div class="a" style="left:537.0px;top:98.2px;width:253.5px;height:26.8px;background:#fff"></div>
<div class="a" style="left:541.6px;top:103.8px;font-size:6.05px;color:#6f66e0;transform-origin:0 5.12px;transform:scaleY(1.15);">#hex to hsv tool&nbsp; #hex hsv converter&nbsp; #how to convert hex to hsv&nbsp; #online hex to hsv</div>
<div class="a" style="left:541.6px;top:113.4px;font-size:6.05px;color:#6f66e0;transform-origin:0 5.12px;transform:scaleY(1.15);">converter&nbsp; #hex to hsv online converter&nbsp; #convert hex data to hsv&nbsp; #hex to hsv color online</div>
<div class="a" style="left:537.0px;top:138px;width:253.5px;height:47.3px;background:#fff"></div>
<div class="a" style="left:537.0px;width:253.5px;top:145.3px;font-size:8.3px;color:#333;text-align:center">Related Tools</div>
<div class="a" style="left:541px;top:155.3px;width:246px;height:0.8px;background:repeating-linear-gradient(to right,#e8e8e8 0 1px,transparent 1px 2px)"></div>
<div class="a" style="left:542px;top:161.0px;width:39px;height:13.3px;background:#fbfbfd"></div>
<div class="a" style="left:544px;top:165.7px;font-size:5.8px;color:#3c3c3c;transform-origin:0 4.91px;transform:scaleY(1.15);">CSS Gradient</div>
<div class="a" style="left:585px;top:161.0px;width:40.4px;height:13.3px;background:#fbfbfd"></div>
<div class="a" style="left:587px;top:165.7px;font-size:5.8px;color:#3c3c3c;transform-origin:0 4.91px;transform:scaleY(1.15);">HEX to CMYK</div>
<div class="a" style="left:629px;top:161.0px;width:35.3px;height:13.3px;background:#e9e9eb"></div>
<div class="a" style="left:631px;top:165.7px;font-size:5.8px;color:#3c3c3c;transform-origin:0 4.91px;transform:scaleY(1.15);">HEX to HSV</div>
<div class="a" style="left:667.4px;top:161.0px;width:36.4px;height:13.3px;background:#fbfbfd"></div>
<div class="a" style="left:669.4px;top:165.7px;font-size:5.8px;color:#3c3c3c;transform-origin:0 4.91px;transform:scaleY(1.15);">HEX to RGB</div>
<div class="a" style="left:707px;top:161.0px;width:35px;height:13.3px;background:#fbfbfd"></div>
<div class="a" style="left:709px;top:165.7px;font-size:5.8px;color:#3c3c3c;transform-origin:0 4.91px;transform:scaleY(1.15);">RGB to Hex</div>
<div class="a" style="left:537.0px;top:198.6px;width:253.5px;height:77px;background:#fff"></div>
<div class="a" style="left:537.0px;width:253.5px;top:206.1px;font-size:8.3px;color:#333;text-align:center">Top Tools</div>
<div class="a" style="left:542.5px;top:221.70000000000002px;width:52.0px;height:13px;background:#fbfbfd"></div>
<div class="a" style="left:544.5px;top:226.5px;font-size:5.8px;color:#3c3c3c;transform-origin:0 4.91px;transform:scaleY(1.15);">Javascript Beautify</div>
<div class="a" style="left:598px;top:221.70000000000002px;width:43px;height:13px;background:#fbfbfd"></div>
<div class="a" style="left:600px;top:226.5px;font-size:5.8px;color:#3c3c3c;transform-origin:0 4.91px;transform:scaleY(1.15);">HTML Beautify</div>
<div class="a" style="left:642.5px;top:221.70000000000002px;width:40.0px;height:13px;background:#fbfbfd"></div>
<div class="a" style="left:644.5px;top:226.5px;font-size:5.8px;color:#3c3c3c;transform-origin:0 4.91px;transform:scaleY(1.15);">Excel To XML</div>
<div class="a" style="left:685px;top:221.70000000000002px;width:41px;height:13px;background:#fbfbfd"></div>
<div class="a" style="left:687px;top:226.5px;font-size:5.8px;color:#3c3c3c;transform-origin:0 4.91px;transform:scaleY(1.15);">YAML To PDF</div>
<div class="a" style="left:542.5px;top:236.3px;width:71.5px;height:13px;background:#fbfbfd"></div>
<div class="a" style="left:544.5px;top:241.1px;font-size:5.8px;color:#3c3c3c;transform-origin:0 4.91px;transform:scaleY(1.15);">Website Download Online</div>
<div class="a" style="left:615.5px;top:236.3px;width:37.5px;height:13px;background:#fbfbfd"></div>
<div class="a" style="left:617.5px;top:241.1px;font-size:5.8px;color:#3c3c3c;transform-origin:0 4.91px;transform:scaleY(1.15);">Video speed</div>
<div class="a" style="left:654.5px;top:236.3px;width:39.5px;height:13px;background:#fbfbfd"></div>
<div class="a" style="left:656.5px;top:241.1px;font-size:5.8px;color:#3c3c3c;transform-origin:0 4.91px;transform:scaleY(1.15);">Resize Video</div>
<div class="a" style="left:695.5px;top:236.3px;width:38.5px;height:13px;background:#fbfbfd"></div>
<div class="a" style="left:697.5px;top:241.1px;font-size:5.8px;color:#3c3c3c;transform-origin:0 4.91px;transform:scaleY(1.15);">Rotate Video</div>
<div class="a" style="left:736px;top:236.3px;width:36px;height:13px;background:#fbfbfd"></div>
<div class="a" style="left:738px;top:241.1px;font-size:5.8px;color:#3c3c3c;transform-origin:0 4.91px;transform:scaleY(1.15);">CSV to SQL</div>
<div class="a" style="left:542.5px;top:250.29999999999998px;width:59.5px;height:13px;background:#fbfbfd"></div>
<div class="a" style="left:544.5px;top:255.09999999999997px;font-size:5.8px;color:#3c3c3c;transform-origin:0 4.91px;transform:scaleY(1.15);">SHA Hash Generator</div>
<div class="a" style="left:537.0px;top:287.5px;width:253.5px;height:63.5px;background:#fff"></div>
<div class="a" style="left:537.0px;width:253.5px;top:295.8px;font-size:8.3px;color:#333;text-align:center">New Tools</div>
<div class="a" style="left:542px;top:311.79999999999995px;width:37px;height:13px;background:#e9e9eb"></div>
<div class="a" style="left:544px;top:316.59999999999997px;font-size:5.8px;color:#3c3c3c;transform-origin:0 4.91px;transform:scaleY(1.15);">HEX to HSV</div>
<div class="a" style="left:581px;top:311.79999999999995px;width:46px;height:13px;background:#fbfbfd"></div>
<div class="a" style="left:583px;top:316.59999999999997px;font-size:5.8px;color:#3c3c3c;transform-origin:0 4.91px;transform:scaleY(1.15);">DOCX to HTML</div>
<div class="a" style="left:628.5px;top:311.79999999999995px;width:38.0px;height:13px;background:#fbfbfd"></div>
<div class="a" style="left:630.5px;top:316.59999999999997px;font-size:5.8px;color:#3c3c3c;transform-origin:0 4.91px;transform:scaleY(1.15);">HEX to RGB</div>
<div class="a" style="left:668px;top:311.79999999999995px;width:41.5px;height:13px;background:#fbfbfd"></div>
<div class="a" style="left:670px;top:316.59999999999997px;font-size:5.8px;color:#3c3c3c;transform-origin:0 4.91px;transform:scaleY(1.15);">DOCX to PDF</div>
<div class="a" style="left:711px;top:311.79999999999995px;width:43px;height:13px;background:#fbfbfd"></div>
<div class="a" style="left:713px;top:316.59999999999997px;font-size:5.8px;color:#3c3c3c;transform-origin:0 4.91px;transform:scaleY(1.15);">HTML to Word</div>
<div class="a" style="left:542px;top:326.09999999999997px;width:42px;height:13px;background:#fbfbfd"></div>
<div class="a" style="left:544px;top:330.9px;font-size:5.8px;color:#3c3c3c;transform-origin:0 4.91px;transform:scaleY(1.15);">HEX to CMYK</div>
<div class="a" style="left:586px;top:326.09999999999997px;width:36px;height:13px;background:#fbfbfd"></div>
<div class="a" style="left:588px;top:330.9px;font-size:5.8px;color:#3c3c3c;transform-origin:0 4.91px;transform:scaleY(1.15);">RGB to Hex</div>
<div class="a" style="left:623.5px;top:326.09999999999997px;width:35.5px;height:13px;background:#fbfbfd"></div>
<div class="a" style="left:625.5px;top:330.9px;font-size:5.8px;color:#3c3c3c;transform-origin:0 4.91px;transform:scaleY(1.15);">JPG to ICO</div>
<div class="a" style="left:660.5px;top:326.09999999999997px;width:34.0px;height:13px;background:#fbfbfd"></div>
<div class="a" style="left:662.5px;top:330.9px;font-size:5.8px;color:#3c3c3c;transform-origin:0 4.91px;transform:scaleY(1.15);">Rotate GIF</div>
<div class="a" style="left:696px;top:326.09999999999997px;width:35.5px;height:13px;background:#fbfbfd"></div>
<div class="a" style="left:698px;top:330.9px;font-size:5.8px;color:#3c3c3c;transform-origin:0 4.91px;transform:scaleY(1.15);">PNG to ICO</div>
<svg style="left:168px;top:261.5px" width="6" height="9" viewBox="0 0 6 9"><path d="M0.4 0.4V7.6L2 6.1L3.2 8.6L4.2 8.1L3.1 5.7H5.4Z" fill="#fff" stroke="#222" stroke-width="0.7" stroke-linejoin="round"/></svg>
<div class="a" style="left:0px;top:436.8px;width:800px;height:13.2px;background:#1f2b36"></div>
<svg style="left:4px;top:441px" width="7" height="6" viewBox="0 0 7 6"><path d="M0 0.8L3 0.4V2.8H0ZM3.4 0.35L7 0V2.8H3.4ZM0 3.2H3V5.6L0 5.2ZM3.4 3.2H7V6L3.4 5.65Z" fill="#e6e8ea"/></svg>
<svg style="left:19px;top:440.5px" width="7" height="7" viewBox="0 0 7 7"><circle cx="4.2" cy="2.8" r="2.2" fill="none" stroke="#e6e8ea" stroke-width="0.7"/><path d="M2.6 4.4L0.4 6.6" stroke="#e6e8ea" stroke-width="0.8"/></svg>
<svg style="left:34px;top:440.8px" width="7" height="6" viewBox="0 0 7 6"><rect x="0.3" y="0.3" width="2.4" height="5.4" fill="none" stroke="#e6e8ea" stroke-width="0.6"/><rect x="3.6" y="1.3" width="2.6" height="3.6" fill="none" stroke="#e6e8ea" stroke-width="0.6"/><path d="M3.6 0.3H6.8M3.6 5.7H6.8" stroke="#e6e8ea" stroke-width="0.5"/></svg>
<div class="a" style="left:50px;top:440.5px;width:7.5px;height:6.5px;background:#f0c23b;border-radius:0.5px"></div>
<div class="a" style="left:50.5px;top:443px;width:6.5px;height:2px;background:#3f8fe0"></div>
<div class="a" style="left:65.5px;top:440px;width:7px;height:7px;background:#f08a3c;border-radius:1px"></div>
<div class="a" style="left:67px;top:441.5px;width:4px;height:4px;background:#f7c08a"></div>
<svg style="left:81.5px;top:440px" width="7" height="7" viewBox="0 0 7 7"><circle cx="3.5" cy="3.5" r="3.3" fill="#d93f2f"/><path d="M3.5 3.5L0.6 5.2A3.3 3.3 0 0 0 5.2 6.4Z" fill="#3a9d4c"/><path d="M3.5 3.5L5.2 6.4A3.3 3.3 0 0 0 6.8 3.1Z" fill="#f4c430"/><circle cx="3.5" cy="3.5" r="1.3" fill="#4a86e8" stroke="#fff" stroke-width="0.5"/></svg>
<div class="a" style="left:97px;top:440px;width:6.5px;height:7px;background:#d9d06a;border-radius:0.5px"></div>
<div class="a" style="left:98px;top:441.5px;width:4.5px;height:4px;background:#8fc46a"></div>
<svg style="left:111.5px;top:440px" width="7.5" height="7" viewBox="0 0 7.5 7"><path d="M5.5 0L7.5 1V6L5.5 7L1.5 3.8L0.5 4.7L0 4.4V2.6L0.5 2.3L1.5 3.2L5.5 0ZM5.5 1.8L3.2 3.5L5.5 5.2Z" fill="#3a96dd"/></svg>
<div class="a" style="left:127.5px;top:441px;width:7px;height:5.5px;background:#b8c0c8;border-radius:0.5px"></div>
<div class="a" style="left:128.5px;top:442px;width:5px;height:2.5px;background:#e8eef2"></div>
<svg style="left:142px;top:440px" width="7" height="7" viewBox="0 0 7 7"><path d="M3.5 0L7 3.5L3.5 7L0 3.5Z" fill="#f2f2f2"/><path d="M3.5 1.2L5.8 3.5L3.5 5.8L1.2 3.5Z" fill="#3a7bd5"/><path d="M3.5 1.2L5.8 3.5L3.5 3.5Z" fill="#f0902a"/></svg>
<div class="a" style="left:155px;top:437px;width:15px;height:13px;background:#3b4650"></div>
<div class="a" style="left:158px;top:440px;width:8px;height:7px;background:#d8392e;border-radius:1.2px"></div>
<div class="a" style="left:160.3px;top:442px;width:3.5px;height:3px;background:#f3b0a8;border-radius:50%"></div>
<div class="a" style="left:49px;top:449px;width:9px;height:1px;background:#7fb2e8"></div>
<div class="a" style="left:64px;top:449px;width:9px;height:1px;background:#7fb2e8"></div>
<div class="a" style="left:80px;top:449px;width:9px;height:1px;background:#7fb2e8"></div>
<div class="a" style="left:95px;top:449px;width:9px;height:1px;background:#7fb2e8"></div>
<div class="a" style="left:110px;top:449px;width:10px;height:1px;background:#7fb2e8"></div>
<div class="a" style="left:126px;top:449px;width:9px;height:1px;background:#7fb2e8"></div>
<div class="a" style="left:156px;top:449px;width:13px;height:1px;background:#7fb2e8"></div>
<div class="a" style="left:777.5px;top:441.6px;font-size:5.0px;color:#e8e8e8;">8:05 PM</div>
</body></html>
